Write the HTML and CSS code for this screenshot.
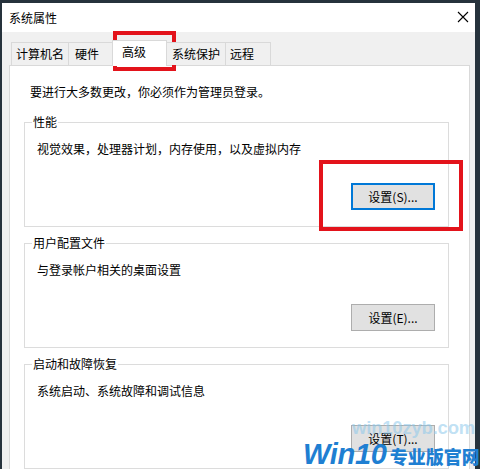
FILE: index.html
```html
<!DOCTYPE html>
<html lang="zh-CN">
<head>
<meta charset="utf-8">
<title>系统属性</title>
<link rel="stylesheet" href="styles.css">
</head>
<body>
<div class="screen">
  <div class="window">
    <div class="titlebar">
      <span class="title">系统属性</span>
      <svg class="close" width="12" height="12" viewBox="0 0 12 12"><path d="M1 1 L11 11 M11 1 L1 11" stroke="#000" stroke-width="1.1" fill="none"/></svg>
    </div>
    <div class="content">
      <div class="tabs">
        <div class="tab t1">计算机名</div>
        <div class="tab t2">硬件</div>
        <div class="tab selected">高级</div>
        <div class="tab t4">系统保护</div>
        <div class="tab t5">远程</div>
      </div>
      <div class="panel">
        <p class="note">要进行大多数更改，你必须作为管理员登录。</p>
        <div class="group">
          <span class="legend">性能</span>
          <p class="desc">视觉效果，处理器计划，内存使用，以及虚拟内存</p>
          <button class="btn focused">设置(S)...</button>
        </div>
        <div class="group">
          <span class="legend">用户配置文件</span>
          <p class="desc">与登录帐户相关的桌面设置</p>
          <button class="btn">设置(E)...</button>
        </div>
        <div class="group">
          <span class="legend">启动和故障恢复</span>
          <p class="desc">系统启动、系统故障和调试信息</p>
          <button class="btn">设置(T)...</button>
        </div>
      </div>
    </div>
  </div>
  <div class="redbox box-tab"></div>
  <div class="redbox box-btn"></div>
  <div class="wm-url">win10zyb.com</div>
  <div class="wm-logo"><span class="wm-win">Win10</span><span class="wm-cn">专业版官网</span></div>
</div>
</body>
</html>
```

FILE: styles.css
```css
* { box-sizing: border-box; }
html, body { margin: 0; padding: 0; }
body {
  font-family: "Noto Sans CJK SC", "Noto Sans", sans-serif;
  font-size: 12px;
  color: #000;
}
.screen {
  position: relative;
  width: 480px;
  height: 469px;
  overflow: hidden;
  background: #26323c;
  padding: 3px 5px 0 2px;
}
.window {
  width: 473px;
  height: 466px;
  background: #f0f0f0;
  display: flex;
  flex-direction: column;
}
.titlebar {
  height: 30px;
  background: #fff;
  display: flex;
  align-items: center;
  justify-content: space-between;
  padding: 0 6px 0 7px;
  line-height: 16px;
}
.close { display: block; margin-top: -2px; }
.content {
  flex: 1;
  padding: 8px 5px 0 7px;
  display: flex;
  flex-direction: column;
}
.tabs {
  display: flex;
  align-items: flex-end;
  height: 25px;
  padding-left: 2px;
  position: relative;
  z-index: 2;
}
.tab {
  height: 23px;
  border: 1px solid #d9d9d9;
  border-bottom: none;
  background: #f0f0f0;
  line-height: 21px;
  text-align: left;
  padding-left: 4px;
  margin-left: -1px;
  white-space: nowrap;
}
.tab:first-child { margin-left: 0; }
.t1 { width: 58px; }
.t2 { width: 46px; padding-left: 6px; }
.t4 { width: 61px; margin-left: 0; padding-left: 6px; }
.t5 { width: 46px; }
.tab.selected {
  width: 55px;
  height: 26px;
  margin: 0 -2px -1px -2px;
  padding-left: 9px;
  background: #fff;
  line-height: 22px;
  position: relative;
  z-index: 3;
}
.panel {
  flex: 1;
  background: #fff;
  border: 1px solid #d9d9d9;
  border-bottom: none;
  padding: 18px 20px 0 14px;
  display: flex;
  flex-direction: column;
  gap: 16px;
}
.note {
  margin: 0 0 6px 6px;
  line-height: 16px;
}
.group {
  position: relative;
  height: 105px;
  flex: none;
  border: 1px solid #dcdcdc;
  padding: 18px 13px 16px 12px;
  display: flex;
  flex-direction: column;
}
.legend {
  position: absolute;
  top: -9px;
  left: 7px;
  padding: 0 1px;
  background: #fff;
  line-height: 16px;
}
.desc {
  margin: 0;
  line-height: 16px;
}
.btn {
  margin-top: auto;
  align-self: flex-end;
  width: 84px;
  height: 27px;
  background: #e1e1e1;
  border: 1px solid #adadad;
  font-family: inherit;
  font-size: 12px;
  color: #000;
  padding: 0;
  line-height: 16px;
}
.btn.focused { border: 2px solid #0078d7; }
.redbox {
  position: absolute;
  border: 4px solid #e3131b;
}
.box-tab { left: 113px; top: 31px; width: 63px; height: 40px; }
.box-btn { left: 319px; top: 160px; width: 144px; height: 71px; }
.wm-url {
  position: absolute;
  left: 352px;
  top: 417px;
  font-family: "Liberation Sans", sans-serif;
  font-weight: bold;
  font-size: 18.5px;
  letter-spacing: -0.2px;
  color: rgba(140, 200, 235, 0.55);
}
.wm-logo {
  position: absolute;
  left: 303px;
  top: 438px;
  display: flex;
  align-items: baseline;
  white-space: nowrap;
}
.wm-win {
  font-family: "Liberation Sans", sans-serif;
  font-style: italic;
  font-weight: bold;
  font-size: 29px;
  color: #1f7fd2;
  letter-spacing: -0.3px;
}
.wm-cn {
  font-family: "Noto Sans CJK SC", sans-serif;
  font-weight: 900;
  font-size: 18px;
  color: #1f7fd2;
  margin-left: 3px;
}
```
